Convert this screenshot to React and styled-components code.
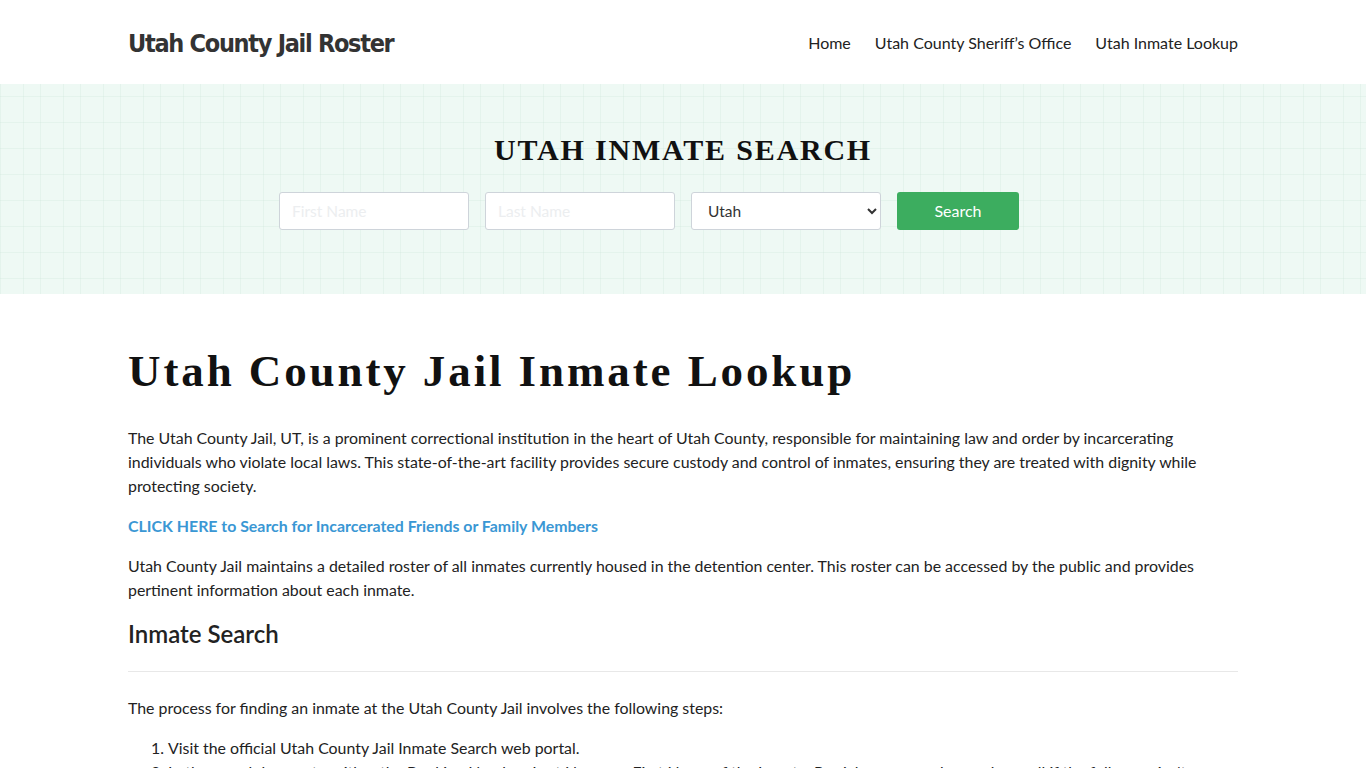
import React from 'react';
import styled, { createGlobalStyle } from 'styled-components';

const GlobalStyle = createGlobalStyle`
    * { box-sizing: border-box; }
    body {
        margin: 0;
        background: #fff;
        color: #222;
        font-family: Lato, "Open Sans", sans-serif;
        font-size: 15.9px;
    }
`

const Container = styled.div`
    width: 1110px;
    margin: 0 auto;
`

const HeaderBar = styled.header`
    height: 84px;
    background: #fff;

    ${Container} {
        height: 100%;
        display: flex;
        align-items: center;
        justify-content: space-between;
    }
`

const Logo = styled.a`
    font-family: "DejaVu Sans Condensed", "DejaVu Sans", sans-serif;
    font-stretch: condensed;
    font-weight: 700;
    font-size: 25px;
    color: #333;
    text-decoration: none;
    letter-spacing: -1.3px;
    margin-top: 2px;
`

const Nav = styled.nav`
    display: flex;
    gap: 24px;
    margin-top: 1px;

    a {
        color: #222;
        text-decoration: none;
        font-size: 16px;
    }
`

const Hero = styled.section`
    height: 210px;
    background-color: #eef9f4;
    background-image:
        linear-gradient(90deg, rgba(200, 225, 212, 0.25) 1px, transparent 1px),
        linear-gradient(90deg, rgba(200, 225, 212, 0.25) 1px, transparent 1px),
        linear-gradient(0deg, rgba(200, 225, 212, 0.25) 1px, transparent 1px);
    background-size: 40px 100%, 40px 100%, 100% 26px;
    background-position: 23px 0, 40px 0, 0 13px;
    display: flex;
    flex-direction: column;
    align-items: center;
    padding-top: 48px;
`

const HeroTitle = styled.h2`
    margin: 0;
    font-family: "Liberation Serif", serif;
    font-weight: 700;
    font-size: 30px;
    letter-spacing: 1.8px;
    color: #111;
    line-height: 36px;
`

const SearchForm = styled.form`
    display: flex;
    gap: 16px;
    margin-top: 24px;
    margin-right: 68px;
`

const Field = styled.input`
    width: 190px;
    height: 38px;
    border: 1px solid #ced4da;
    border-radius: 3px;
    padding: 0 12px;
    font-family: Lato, sans-serif;
    font-size: 15.5px;
    background: #fff;

    &::placeholder { color: #eceef0; }
`

const Select = styled.select`
    width: 190px;
    height: 38px;
    border: 1px solid #ced4da;
    border-radius: 3px;
    padding: 0 12px;
    font-family: Lato, sans-serif;
    font-size: 15.5px;
    color: #333;
    background: #fff;
`

const Button = styled.button`
    width: 122px;
    height: 38px;
    border: none;
    border-radius: 3px;
    background: #3cad5f;
    color: #fff;
    font-family: Lato, sans-serif;
    font-size: 16px;
    padding: 0 0 2px;
`

const Main = styled.main`
    padding-top: 48px;
`

const Title = styled.h1`
    margin: 0 0 26px;
    font-family: "Liberation Serif", serif;
    font-weight: 700;
    font-size: 45px;
    letter-spacing: 2.9px;
    line-height: 58px;
    color: #111;
`

const Para = styled.p`
    margin: 0 0 16px;
    line-height: 24px;
    color: #222;
`

const Link = styled.a`
    color: #3a97d4;
    font-weight: 700;
    text-decoration: none;
`

const SubTitle = styled.h2`
    margin: 0;
    font-size: 24px;
    font-weight: 600;
    line-height: 32px;
    color: #222;
`

const Rule = styled.hr`
    border: none;
    border-top: 1px solid #e8e8e8;
    margin: 21px 0 24px;
`

const Steps = styled.ol`
    margin: 0;
    padding-left: 40px;
    line-height: 24px;
`

const App = () => {
    return (
        <>
            <GlobalStyle />
            <HeaderBar>
                <Container>
                    <Logo href='#'>Utah County Jail Roster</Logo>
                    <Nav>
                        <a href='#'>Home</a>
                        <a href='#'>Utah County Sheriff’s Office</a>
                        <a href='#'>Utah Inmate Lookup</a>
                    </Nav>
                </Container>
            </HeaderBar>
            <Hero>
                <HeroTitle>UTAH INMATE SEARCH</HeroTitle>
                <SearchForm onSubmit={e => e.preventDefault()}>
                    <Field placeholder='First Name' />
                    <Field placeholder='Last Name' />
                    <Select defaultValue='Utah'>
                        <option>Utah</option>
                    </Select>
                    <Button type='submit'>Search</Button>
                </SearchForm>
            </Hero>
            <Main>
                <Container>
                    <Title>Utah County Jail Inmate Lookup</Title>
                    <Para>The Utah County Jail, UT, is a prominent correctional institution in the heart of Utah County, responsible for maintaining law and order by incarcerating individuals who violate local laws. This state-of-the-art facility provides secure custody and control of inmates, ensuring they are treated with dignity while protecting society.</Para>
                    <Para><Link href='#'>CLICK HERE to Search for Incarcerated Friends or Family Members</Link></Para>
                    <Para>Utah County Jail maintains a detailed roster of all inmates currently housed in the detention center. This roster can be accessed by the public and provides pertinent information about each inmate.</Para>
                    <SubTitle>Inmate Search</SubTitle>
                    <Rule />
                    <Para>The process for finding an inmate at the Utah County Jail involves the following steps:</Para>
                    <Steps>
                        <li>Visit the official Utah County Jail Inmate Search web portal.</li>
                        <li>In the search box, enter either the Booking Number, Last Name, or First Name of the Inmate. Partial names can be used as well if the full name isn't known.</li>
                    </Steps>
                </Container>
            </Main>
        </>
    )
}

export default App
